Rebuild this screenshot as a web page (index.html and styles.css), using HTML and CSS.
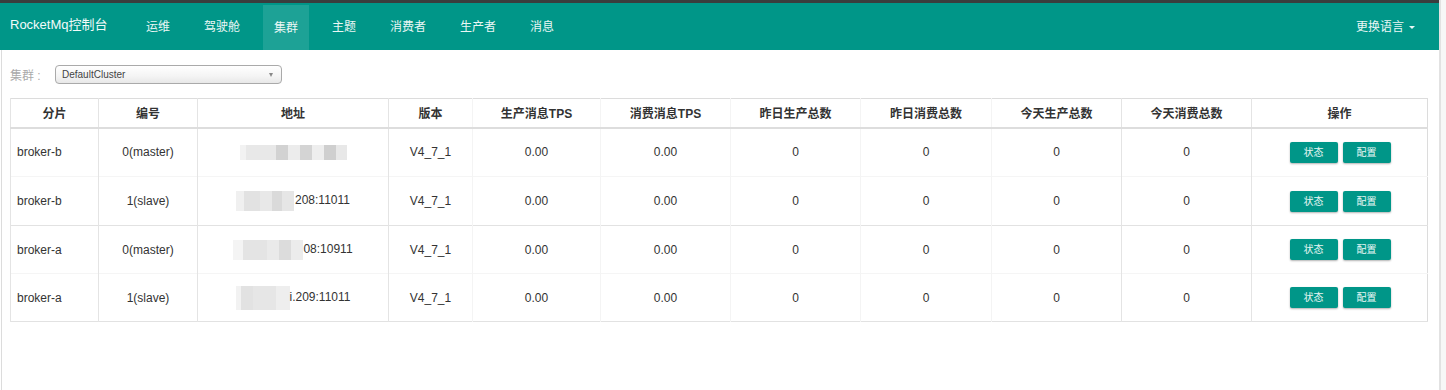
FILE: index.html
```html
<!DOCTYPE html>
<html lang="zh">
<head>
<meta charset="utf-8">
<title>RocketMq控制台</title>
<link rel="stylesheet" href="styles.css">
</head>
<body>
<div class="page">
  <div class="topline"></div>
  <nav class="navbar">
    <a class="brand">RocketMq控制台</a>
    <ul class="nav">
      <li>运维</li>
      <li>驾驶舱</li>
      <li class="active">集群</li>
      <li>主题</li>
      <li>消费者</li>
      <li>生产者</li>
      <li>消息</li>
    </ul>
    <div class="lang">更换语言 <span class="caret"></span></div>
  </nav>
  <main class="content">
    <div class="filter">
      <span class="filter-label">集群 :</span>
      <div class="select"><span>DefaultCluster</span><span class="sel-arrow"></span></div>
    </div>
    <table class="grid">
      <colgroup>
        <col style="width:88px"><col style="width:99px"><col style="width:191px"><col style="width:84px">
        <col style="width:128px"><col style="width:130px"><col style="width:130px"><col style="width:131px">
        <col style="width:130px"><col style="width:130px"><col style="width:176px">
      </colgroup>
      <thead>
        <tr>
          <th>分片</th><th>编号</th><th>地址</th><th>版本</th>
          <th class="soft">生产消息TPS</th><th class="soft">消费消息TPS</th><th class="soft">昨日生产总数</th><th class="soft">昨日消费总数</th>
          <th>今天生产总数</th><th>今天消费总数</th><th>操作</th>
        </tr>
      </thead>
      <tbody class="g1">
        <tr>
          <td class="left">broker-b</td><td>0(master)</td>
          <td><span class="blur b1"></span></td>
          <td>V4_7_1</td><td class="soft">0.00</td><td class="soft">0.00</td><td class="soft">0</td><td class="soft">0</td><td>0</td><td>0</td>
          <td><span class="btn">状态</span><span class="btn">配置</span></td>
        </tr>
        <tr class="faint">
          <td class="left">broker-b</td><td>1(slave)</td>
          <td><span class="blur b2"></span>208:11011</td>
          <td>V4_7_1</td><td class="soft">0.00</td><td class="soft">0.00</td><td class="soft">0</td><td class="soft">0</td><td>0</td><td>0</td>
          <td><span class="btn">状态</span><span class="btn">配置</span></td>
        </tr>
      </tbody>
      <tbody>
        <tr>
          <td class="left">broker-a</td><td>0(master)</td>
          <td><span class="blur b3"></span>08:10911</td>
          <td>V4_7_1</td><td class="soft">0.00</td><td class="soft">0.00</td><td class="soft">0</td><td class="soft">0</td><td>0</td><td>0</td>
          <td><span class="btn">状态</span><span class="btn">配置</span></td>
        </tr>
        <tr class="faint">
          <td class="left">broker-a</td><td>1(slave)</td>
          <td><span class="blur b4"></span>i.209:11011</td>
          <td>V4_7_1</td><td class="soft">0.00</td><td class="soft">0.00</td><td class="soft">0</td><td class="soft">0</td><td>0</td><td>0</td>
          <td><span class="btn">状态</span><span class="btn">配置</span></td>
        </tr>
      </tbody>
    </table>
  </main>
</div>
<div class="scroll-strip"></div>
</body>
</html>
```

FILE: styles.css
```css
* { box-sizing: border-box; }
html, body { margin: 0; padding: 0; }
body {
  display: flex;
  width: 1446px;
  height: 390px;
  overflow: hidden;
  font-family: "Liberation Sans", Arial, "Noto Sans CJK SC", sans-serif;
  color: #333;
  background: #fff;
}
.page {
  width: 1439px;
  display: flex;
  flex-direction: column;
}
.scroll-strip {
  width: 7px;
  border-left: 2px solid #e2e2e2;
  background: #f7f7f7;
}
.topline {
  height: 3px;
  background: #3a3d3d;
}
.navbar {
  height: 47px;
  background: #009688;
  display: flex;
  align-items: stretch;
  color: #fff;
}
.brand {
  font-size: 13px;
  padding: 0 0 0 10px;
  line-height: 44px;
  width: 135px;
  color: #f3fbfa;
}
.nav {
  list-style: none;
  margin: 0;
  padding: 0;
  display: flex;
}
.nav li {
  font-size: 12px;
  padding: 0 11px;
  margin-right: 12px;
  line-height: 48px;
  color: #eaf7f5;
}
.nav li.active {
  background: #1da296;
  margin-top: 2px;
  line-height: 46px;
}
.lang {
  margin-left: auto;
  margin-right: 24px;
  font-size: 12px;
  line-height: 48px;
  color: #eaf7f5;
  display: flex;
  align-items: center;
  gap: 5px;
}
.caret {
  width: 0; height: 0;
  border-left: 3px solid transparent;
  border-right: 3px solid transparent;
  border-top: 3px solid #eaf7f5;
  margin-top: 1px;
}
.content {
  flex: 1;
  border-left: 1px solid #dcdcdc;
  margin-left: 1px;
  padding: 15px 0 0 8px;
}
.filter {
  display: flex;
  align-items: center;
  height: 19px;
  margin-bottom: 14px;
}
.filter-label {
  font-size: 12px;
  color: #aaa;
  width: 45px;
}
.select {
  width: 227px;
  height: 19px;
  border: 1px solid #aaa;
  border-radius: 4px;
  background: linear-gradient(#fff 0%, #f4f4f4 60%, #e8e8e8 100%);
  display: flex;
  align-items: center;
  justify-content: space-between;
  padding: 0 8px 0 6px;
  font-size: 10px;
  color: #444;
}
.sel-arrow {
  width: 0; height: 0;
  border-left: 2.5px solid transparent;
  border-right: 2.5px solid transparent;
  border-top: 4px solid #888;
}
.grid {
  width: 1417px;
  border-collapse: collapse;
  table-layout: fixed;
  font-size: 12px;
  border: 1px solid #dcdcdc;
}
.grid th {
  height: 29px;
  font-weight: bold;
  font-size: 12px;
  color: #333;
  border-bottom: 2px solid #dddddd;
  border-left: 1px solid #e4e4e4;
  text-align: center;
  padding: 0;
}
.grid td {
  height: 48px;
  text-align: center;
  padding: 0;
  border-left: 1px solid #e4e4e4;
  color: #333;
}
.grid tbody.g1 td { height: 49px; }
.grid th.soft, .grid td.soft { border-left-color: #f4f4f4; }
.grid td.soft + td:not(.soft) { border-left-color: #f4f4f4; }
.grid th.soft + th:not(.soft) { border-left-color: #f4f4f4; }
.grid td.left { text-align: left; padding-left: 6px; }
.grid tbody { border-bottom: 1px solid #e2e2e2; }
.grid tr.faint td { border-top: 1px solid #f5f5f5; }
.btn {
  display: inline-block;
  width: 48px;
  height: 21px;
  line-height: 21px;
  margin: 0 2px 0 3px;
  background: #009688;
  color: #e8f6f4;
  font-size: 10px;
  border-radius: 2px;
  box-shadow: 0 1px 2px rgba(0,0,0,0.3);
  vertical-align: middle;
}
.blur {
  display: inline-block;
  height: 15px;
  vertical-align: middle;
}
.b1 {
  width: 107px;
  background: linear-gradient(90deg, #f2f2f2 0 6px, #e8e8e8 6px 36px, #d2d2d2 36px 48px, #ececec 48px 60px, #d4d4d4 60px 72px, #eeeeee 72px 84px, #cfcfcf 84px 96px, #e8e8e8 96px 107px);
}
.b2 {
  width: 58px;
  height: 20px;
  margin-right: 1px;
  background: linear-gradient(90deg, #f0f0f0 0 8px, #e2e2e2 8px 24px, #e8e8e8 24px 36px, #dadada 36px 46px, #e6e6e6 46px 58px);
}
.b3 {
  width: 70px;
  height: 20px;
  background: linear-gradient(90deg, #f4f4f4 0 10px, #e4e4e4 10px 34px, #eaeaea 34px 46px, #dcdcdc 46px 58px, #ececec 58px 70px);
}
.b4 {
  width: 54px;
  height: 24px;
  background: linear-gradient(90deg, #f2f2f2 0 5px, #e2e2e2 5px 17px, #e6e6e6 17px 40px, #eeeeee 40px 54px);
}
```
